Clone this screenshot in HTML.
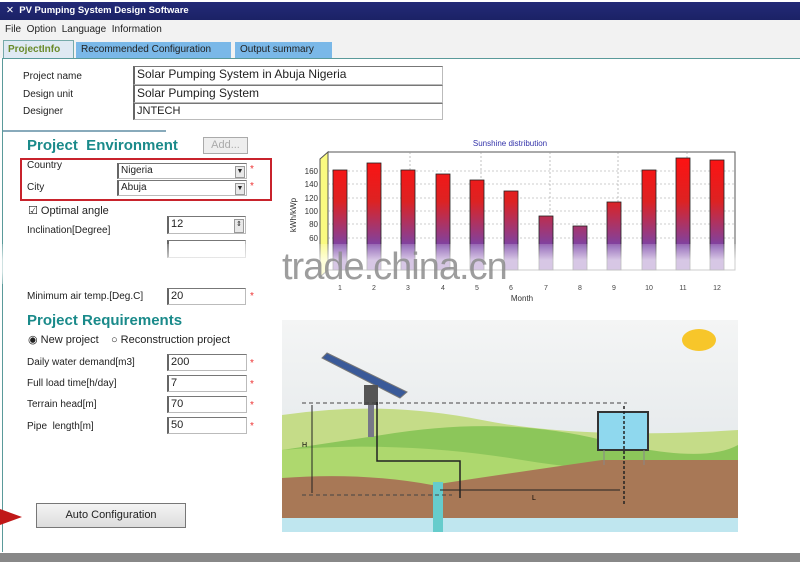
<!DOCTYPE html>
<html><head><meta charset="utf-8"><style>
*{margin:0;padding:0;box-sizing:border-box}
body{width:800px;height:562px;overflow:hidden;background:#fff;font-family:"Liberation Sans","DejaVu Sans",sans-serif;position:relative;font-size:10px;color:#222}
.a{position:absolute}
.inp{position:absolute;background:#fff;border:1px solid #bbb;border-left:2px solid #666;border-top:1px solid #777;font-size:11px;padding-left:2px;line-height:14px;height:17px}
.lbl{position:absolute;font-size:10px;color:#222}
.star{position:absolute;color:#e33;font-size:10px}
.h{position:absolute;font-weight:bold;color:#1a8a8a;font-size:15px}
.dd{position:absolute;right:1px;top:2px;width:10px;height:12px;background:#e8e8e8;border:1px solid #999;font-size:7px;text-align:center;line-height:10px}
</style></head><body>
<div class="a" style="left:0;top:2px;width:800px;height:18px;background:linear-gradient(#232a78,#1b2266);color:#fff;font-weight:bold;font-size:9.5px;line-height:18px;padding-left:6px">✕ &nbsp;PV Pumping System Design Software</div>
<div class="a" style="left:0;top:20px;width:800px;height:20px;background:#f2f2f2;font-size:10px;line-height:20px;padding-left:5px">File&nbsp; Option&nbsp; Language&nbsp; Information</div>
<div class="a" style="left:0;top:40px;width:800px;height:18px;background:#f2f2f2"></div>
<div class="a" style="left:3px;top:40px;width:71px;height:18px;background:#dfe9f3;border:1px solid #7aa;border-bottom:none;color:#6a8a2a;font-weight:bold;font-size:10px;line-height:17px;padding-left:4px">ProjectInfo</div>
<div class="a" style="left:76px;top:42px;width:155px;height:16px;background:#7ab8e8;font-size:10px;line-height:16px;padding-left:5px">Recommended Configuration</div>
<div class="a" style="left:235px;top:42px;width:97px;height:16px;background:#7ab8e8;font-size:10px;line-height:16px;padding-left:5px">Output summary</div>
<div class="a" style="left:2px;top:58px;width:798px;height:1px;background:#5a9a9a"></div>
<div class="a" style="left:2px;top:58px;width:1px;height:494px;background:#5a9a9a"></div>
<div class="a" style="left:0;top:553px;width:800px;height:9px;background:#888"></div>

<div class="lbl" style="left:23px;top:71px">Project name</div>
<div class="lbl" style="left:23px;top:89px">Design unit</div>
<div class="lbl" style="left:23px;top:106px">Designer</div>
<div class="inp" style="left:133px;top:66px;width:310px;height:19px;font-size:12px">Solar Pumping System in Abuja Nigeria</div>
<div class="inp" style="left:133px;top:85px;width:310px;height:18px;font-size:12px">Solar Pumping System</div>
<div class="inp" style="left:133px;top:103px;width:310px;height:17px;font-size:11px">JNTECH</div>
<div class="a" style="left:3px;top:130px;width:163px;height:2px;background:#8ab"></div>

<div class="h" style="left:27px;top:137px">Project&nbsp; Environment</div>
<div class="a" style="left:203px;top:137px;width:45px;height:17px;border:1px solid #aaa;background:#eee;color:#aaa;font-size:11px;text-align:center;line-height:15px">Add...</div>
<div class="a" style="left:20px;top:158px;width:252px;height:43px;border:2px solid #c8232c"></div>
<div class="lbl" style="left:27px;top:160px">Country</div>
<div class="lbl" style="left:27px;top:182px">City</div>
<div class="inp" style="left:117px;top:163px;width:130px;height:16px;font-size:10px">Nigeria<div class="dd">▼</div></div>
<div class="inp" style="left:117px;top:180px;width:130px;height:16px;font-size:10px">Abuja<div class="dd">▼</div></div>
<div class="star" style="left:250px;top:164px">*</div><div class="star" style="left:250px;top:181px">*</div>
<div class="lbl" style="left:28px;top:204px;font-size:11px">☑ Optimal angle</div>
<div class="lbl" style="left:27px;top:225px">Inclination[Degree]</div>
<div class="inp" style="left:167px;top:216px;width:79px;height:18px">12<div class="dd" style="height:14px">⇕</div></div>
<div class="inp" style="left:167px;top:240px;width:79px;height:18px"></div>
<div class="lbl" style="left:27px;top:291px">Minimum air temp.[Deg.C]</div>
<div class="inp" style="left:167px;top:288px;width:79px;height:17px">20</div>
<div class="star" style="left:250px;top:291px">*</div>

<div class="h" style="left:27px;top:312px">Project Requirements</div>
<div class="lbl" style="left:28px;top:333px;font-size:11px">◉ New project &nbsp;&nbsp; ○ Reconstruction project</div>
<div class="lbl" style="left:27px;top:357px">Daily water demand[m3]</div>
<div class="lbl" style="left:27px;top:378px">Full load time[h/day]</div>
<div class="lbl" style="left:27px;top:399px">Terrain head[m]</div>
<div class="lbl" style="left:27px;top:421px">Pipe&nbsp; length[m]</div>
<div class="inp" style="left:167px;top:354px;width:80px;height:17px">200</div>
<div class="inp" style="left:167px;top:375px;width:80px;height:17px">7</div>
<div class="inp" style="left:167px;top:396px;width:80px;height:17px">70</div>
<div class="inp" style="left:167px;top:417px;width:80px;height:17px">50</div>
<div class="star" style="left:250px;top:358px">*</div><div class="star" style="left:250px;top:379px">*</div><div class="star" style="left:250px;top:400px">*</div><div class="star" style="left:250px;top:421px">*</div>
<div class="a" style="left:0;top:509px;width:0;height:0;border-top:8px solid transparent;border-bottom:8px solid transparent;border-left:22px solid #c01818"></div>
<div class="a" style="left:36px;top:503px;width:150px;height:25px;border:1px solid #777;background:linear-gradient(#f4f4f4,#ddd);font-size:11px;text-align:center;line-height:23px">Auto Configuration</div>

<svg class="a" style="left:282px;top:135px" width="460" height="175">
<defs><linearGradient id="g" gradientUnits="userSpaceOnUse" x1="0" y1="20" x2="0" y2="135"><stop offset="0" stop-color="#f11"/><stop offset=".4" stop-color="#d22"/><stop offset=".8" stop-color="#7a44a8"/><stop offset="1" stop-color="#7a44a8"/></linearGradient></defs>
<text x="228" y="11" font-size="8" fill="#3333aa" text-anchor="middle" font-family="Liberation Sans">Sunshine distribution</text>
<rect x="46" y="17" width="407" height="118" fill="#fff" stroke="#555"/>
<polygon points="38,24 46,17 46,135 38,142" fill="#fafa80" stroke="#555"/>
<g stroke="#999" stroke-dasharray="2,2" stroke-width=".6">
<line x1="46" y1="36" x2="453" y2="36"/><line x1="46" y1="49" x2="453" y2="49"/><line x1="46" y1="63" x2="453" y2="63"/><line x1="46" y1="76" x2="453" y2="76"/><line x1="46" y1="89" x2="453" y2="89"/><line x1="46" y1="103" x2="453" y2="103"/>
<line x1="128" y1="17" x2="128" y2="135"/><line x1="199" y1="17" x2="199" y2="135"/><line x1="268" y1="17" x2="268" y2="135"/><line x1="336" y1="17" x2="336" y2="135"/><line x1="405" y1="17" x2="405" y2="135"/></g>
<g font-size="8" fill="#333" text-anchor="end" font-family="Liberation Sans"><text x="36" y="39">160</text><text x="36" y="52">140</text><text x="36" y="66">120</text><text x="36" y="79">100</text><text x="36" y="92">80</text><text x="36" y="106">60</text></g>
<text x="14" y="80" font-size="8" fill="#333" transform="rotate(-90 14 80)" text-anchor="middle">kWh/kWp</text>
<g stroke="#222" stroke-width=".8">
<rect x="51" y="35" width="14" height="100" fill="url(#g)"/><rect x="85" y="28" width="14" height="107" fill="url(#g)"/><rect x="119" y="35" width="14" height="100" fill="url(#g)"/><rect x="154" y="39" width="14" height="96" fill="url(#g)"/><rect x="188" y="45" width="14" height="90" fill="url(#g)"/><rect x="222" y="56" width="14" height="79" fill="url(#g)"/><rect x="257" y="81" width="14" height="54" fill="url(#g)"/><rect x="291" y="91" width="14" height="44" fill="url(#g)"/><rect x="325" y="67" width="14" height="68" fill="url(#g)"/><rect x="360" y="35" width="14" height="100" fill="url(#g)"/><rect x="394" y="23" width="14" height="112" fill="url(#g)"/><rect x="428" y="25" width="14" height="110" fill="url(#g)"/></g>
<g font-size="7" fill="#444" text-anchor="middle"><text x="58" y="155">1</text><text x="92" y="155">2</text><text x="126" y="155">3</text><text x="161" y="155">4</text><text x="195" y="155">5</text><text x="229" y="155">6</text><text x="264" y="155">7</text><text x="298" y="155">8</text><text x="332" y="155">9</text><text x="367" y="155">10</text><text x="401" y="155">11</text><text x="435" y="155">12</text></g>
<text x="240" y="166" font-size="8" fill="#333" text-anchor="middle">Month</text>
</svg>
<div class="a" style="left:0;top:244px;width:800px;height:40px;background:linear-gradient(rgba(255,255,255,.2),rgba(255,255,255,.7) 40%,rgba(255,255,255,.7) 70%,rgba(255,255,255,.3))"></div>
<div class="a" style="left:282px;top:246px;font-size:38px;color:#8d8d8d;letter-spacing:-1px;opacity:.85">trade.china.cn</div>

<svg class="a" style="left:282px;top:320px" width="456" height="212">
<defs><linearGradient id="sky" x1="0" y1="0" x2="0" y2="1"><stop offset="0" stop-color="#f4f5f5"/><stop offset="1" stop-color="#dde3e6"/></linearGradient></defs>
<rect width="456" height="212" fill="url(#sky)"/>
<ellipse cx="417" cy="20" rx="17" ry="11" fill="#f7c62a"/>
<path d="M0 95 Q100 80 200 100 T456 110 V212 H0Z" fill="#c5dc88"/>
<path d="M100 115 Q220 95 320 120 T456 125 V212 H0 V130Z" fill="#8cc65a"/>
<path d="M0 130 Q120 120 240 140 T456 140 V212 H0Z" fill="#aed86e"/>
<path d="M0 158 Q80 152 150 165 Q250 150 320 140 L456 140 V212 H0Z" fill="#a87856"/>
<rect y="198" width="456" height="14" fill="#bfe6ef"/>
<polygon points="45,33 125,72 118,78 40,38" fill="#3a5a99" stroke="#777"/>
<rect x="82" y="65" width="14" height="20" fill="#555"/>
<rect x="86" y="85" width="6" height="32" fill="#778"/>
<path d="M95 82 V141 H178 V178" stroke="#222" stroke-width="1.5" fill="none"/>
<rect x="151" y="162" width="10" height="50" fill="#6cc"/>
<path d="M20 83 H345" stroke="#444" stroke-dasharray="4,3"/>
<path d="M20 175 H170" stroke="#444" stroke-dasharray="4,3"/>
<path d="M30 85 V173" stroke="#222"/>
<text x="20" y="127" font-size="7">H</text>
<rect x="316" y="92" width="50" height="38" fill="#8fd8ee" stroke="#333" stroke-width="2"/>
<path d="M322 130 V145 M362 130 V145" stroke="#888"/>
<path d="M158 170 H338" stroke="#222"/>
<path d="M342 86 V185" stroke="#222" stroke-dasharray="3,2" stroke-width="1.5"/>
<text x="250" y="180" font-size="7">L</text>
</svg>
</body></html>
